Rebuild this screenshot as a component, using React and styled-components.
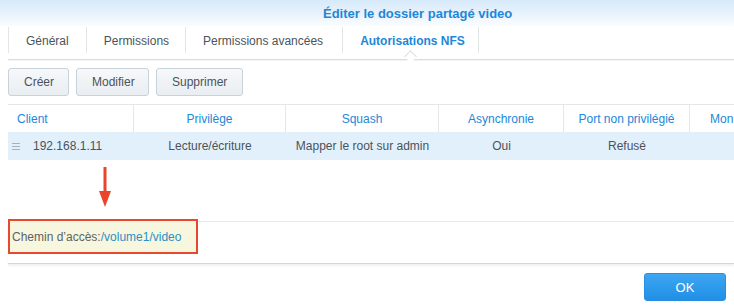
import React from "react";
import styled, { createGlobalStyle } from "styled-components";

const Global = createGlobalStyle`
  html, body { margin: 0; padding: 0; background: #fff; }
  body { font-family: "Liberation Sans", Arial, sans-serif; overflow: hidden; }
  * { box-sizing: border-box; }
`;

const Window = styled.div`
  width: 734px;
  height: 307px;
  display: flex;
  flex-direction: column;
  background: #fff;
  color: #4b535b;
  font-size: 12px;
  overflow: hidden;
`;

const TitleBar = styled.div`
  height: 26px;
  flex: none;
  display: flex;
  align-items: center;
  padding-left: 323px;
  background: linear-gradient(to bottom, #d6eafa 0%, #e8f3fc 55%, #fbfdff 100%);
  color: #1d87d8;
  font-weight: bold;
  font-size: 13px;
`;

const Content = styled.div`
  padding-left: 8px;
  display: flex;
  flex-direction: column;
`;

const TabBar = styled.div`
  height: 33px;
  margin-top: 1px;
  display: flex;
  align-items: flex-start;
  border-bottom: 1px solid #d9dde1;
  box-shadow: 0 1px 1px rgba(0,0,0,0.04);
  position: relative;
`;

const Tab = styled.div`
  position: relative;
  height: 26px;
  display: flex;
  align-items: center;
  padding: 1px ${(p) => p.$pr}px 0 17px;
  border-left: ${(p) => (p.$first ? "1px solid #e3e6e9" : "none")};
  border-right: 1px solid #e3e6e9;
  color: ${(p) => (p.$active ? "#1d87d8" : "#4b535b")};
  font-weight: ${(p) => (p.$active ? "bold" : "normal")};
`;

const Caret = styled.span`
  position: absolute;
  left: 50%;
  bottom: -8px;
  width: 9px;
  height: 9px;
  margin-left: -4px;
  background: #fff;
  border-left: 1px solid #d9dde1;
  border-top: 1px solid #d9dde1;
  transform: rotate(45deg);
`;

const Toolbar = styled.div`
  display: flex;
  gap: 7px;
  padding-top: 8px;
  height: 44px;
`;

const Button = styled.button`
  height: 28px;
  padding: 0 15px;
  border: 1px solid #c9d2da;
  border-radius: 3px;
  background: linear-gradient(to bottom, #f6f8fa, #e9eef2);
  color: #4b535b;
  font-family: inherit;
  font-size: 12px;
  width: ${(p) => p.$w}px;
`;

const Table = styled.div`
  border-top: 1px solid #e3e6e9;
`;

const Row = styled.div`
  display: grid;
  grid-template-columns: 126px 152px 153px 125px 126px 1fr;
  height: ${(p) => (p.$head ? 27 : 28)}px;
  background: ${(p) => (p.$head ? "#fff" : "#e2f0fb")};
`;

const HeadCell = styled.div`
  display: flex;
  align-items: center;
  justify-content: ${(p) => (p.$left ? "flex-start" : "center")};
  padding-left: ${(p) => (p.$left ? "9px" : "0")};
  border-right: 1px solid #e5e8eb;
  color: #1d87d8;
  white-space: nowrap;
  overflow: hidden;
  &:last-child { border-right: none; justify-content: flex-start; padding-left: 20px; }
`;

const Cell = styled.div`
  display: flex;
  align-items: center;
  justify-content: ${(p) => (p.$left ? "flex-start" : "center")};
  gap: 13px;
  padding-left: ${(p) => (p.$left ? "4px" : "0")};
  white-space: nowrap;
  color: #4b535b;
`;

const Handle = styled.span`
  display: inline-flex;
  flex-direction: column;
  gap: 2px;
  width: 8px;
  & > i { display: block; height: 1px; background: #a9b0b6; }
`;

const Blank = styled.div`
  height: 61px;
  position: relative;
`;

const Arrow = styled.svg`
  position: absolute;
  left: 90px;
  top: 7px;
`;

const PathArea = styled.div`
  border-top: 1px solid #e7e9eb;
  height: 43px;
  border-bottom: 1px solid #d3d7da;
  box-shadow: 0 2px 2px rgba(0,0,0,0.06);
`;

const PathBox = styled.div`
  width: 190px;
  height: 35px;
  margin-top: -3px;
  border: 2px solid #e8492e;
  background: #f7f6df;
  display: flex;
  align-items: center;
  padding-left: 2px;
  color: #5e6266;
  white-space: nowrap;
`;

const PathLink = styled.span`
  color: #2a90c6;
`;

const Footer = styled.div`
  display: flex;
  justify-content: flex-end;
  padding: 9px 8px 0 0;
`;

const OkButton = styled.button`
  width: 82px;
  height: 28px;
  border: 1px solid #2a8ee0;
  border-radius: 3px;
  background: linear-gradient(to bottom, #3ea6f2, #208fe6);
  color: #fff;
  font-family: inherit;
  font-size: 13px;
`;

export default function App() {
  const tabs = [
    { t: "Général", pr: 17 },
    { t: "Permissions", pr: 16 },
    { t: "Permissions avancées", pr: 19 },
    { t: "Autorisations NFS", pr: 13 },
  ];
  const heads = ["Client", "Privilège", "Squash", "Asynchronie", "Port non privilégié", "Mon"];
  return (
    <>
      <Global />
      <Window>
        <TitleBar>Éditer le dossier partagé video</TitleBar>
        <Content>
          <TabBar>
            {tabs.map((t, i) => (
              <Tab key={t.t} $pr={t.pr} $first={i === 0} $active={i === 3}>
                {t.t}
                {i === 3 && <Caret />}
              </Tab>
            ))}
          </TabBar>
          <Toolbar>
            <Button $w={61}>Créer</Button>
            <Button $w={73}>Modifier</Button>
            <Button $w={87}>Supprimer</Button>
          </Toolbar>
          <Table>
            <Row $head>
              {heads.map((h, i) => (
                <HeadCell key={h} $left={i === 0}>{h}</HeadCell>
              ))}
            </Row>
            <Row>
              <Cell $left>
                <Handle><i /><i /><i /></Handle>
                192.168.1.11
              </Cell>
              <Cell>Lecture/écriture</Cell>
              <Cell>Mapper le root sur admin</Cell>
              <Cell>Oui</Cell>
              <Cell>Refusé</Cell>
              <Cell />
            </Row>
          </Table>
          <Blank>
            <Arrow width="14" height="42" viewBox="0 0 14 42">
              <rect x="5.5" y="0" width="3" height="28" fill="#e8452c" />
              <polygon points="1,24 13,24 7,40" fill="#e8452c" />
            </Arrow>
          </Blank>
          <PathArea>
            <PathBox>
              Chemin d’accès:<PathLink>/volume1/video</PathLink>
            </PathBox>
          </PathArea>
        </Content>
        <Footer>
          <OkButton>OK</OkButton>
        </Footer>
      </Window>
    </>
  );
}
